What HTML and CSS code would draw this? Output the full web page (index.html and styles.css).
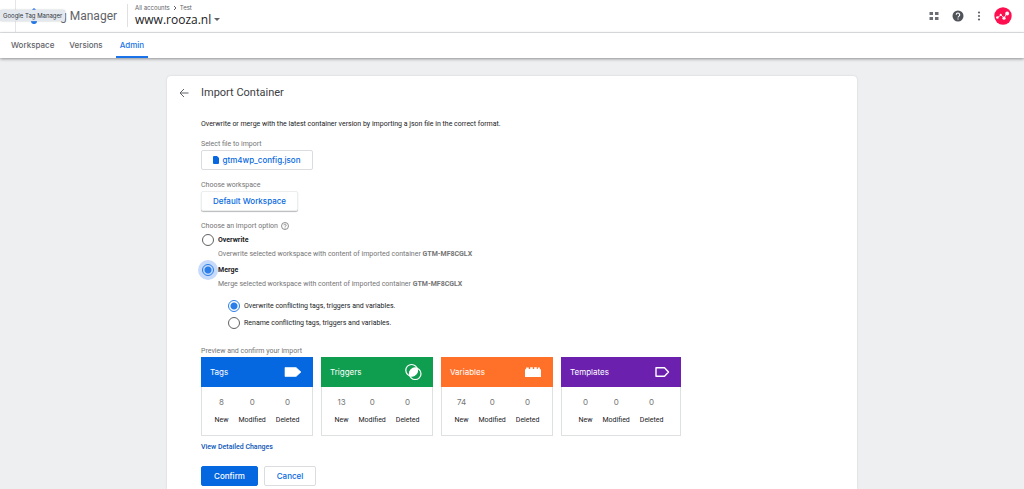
FILE: index.html
```html
<!DOCTYPE html>
<html lang="en">
<head>
<meta charset="utf-8">
<title>Google Tag Manager</title>
<link rel="stylesheet" href="styles.css">
</head>
<body>
<header class="topbar">
  <div class="brand">
    <svg class="logo" viewBox="0 0 18 18" aria-hidden="true"><path d="M9 1 17 9 9 17 1 9z" fill="#8ab4f8"/><path d="M6 4 9 1l8 8-3 3z" fill="#4285f4"/><circle cx="9" cy="14" r="3" fill="#1a73e8"/></svg>
    <span class="brand-name">Tag Manager</span>
    <span class="tooltip" role="tooltip">Google Tag Manager</span>
  </div>
  <div class="account">
    <div class="crumbs">All accounts <svg class="chevron" viewBox="0 0 4 6" aria-hidden="true"><path d="M1 1l2 2-2 2" fill="none" stroke="#5f6368"/></svg> Test</div>
    <button class="site" type="button">www.rooza.nl <svg class="caret" viewBox="0 0 6 3" aria-hidden="true"><path d="M0 0h6L3 3z" fill="#5f6368"/></svg></button>
  </div>
  <div class="actions">
    <button type="button" class="icon-btn" aria-label="Apps"><svg width="10" height="10" viewBox="0 0 10 10" fill="#6b6f74"><path d="M.5 1h3.500v3H.5zM6 1h3.500v3H6zM.5 6h3.500v3H.5zM6 6h3.500v3H6z"/></svg></button>
    <button type="button" class="icon-btn" aria-label="Help"><svg width="12" height="12" viewBox="0 0 12 12"><circle cx="6" cy="6" r="5.500" fill="#50545a"/><path d="M4.300 4.800a1.700 1.700 0 1 1 2.700 1.300C6.400 6.500 6 6.800 6 7.500M6 8.400v1.200" fill="none" stroke="#fff" stroke-width="1.100"/></svg></button>
    <button type="button" class="icon-btn" aria-label="More"><svg width="4" height="10" viewBox="0 0 4 10" fill="#5f6368"><circle cx="2" cy="1.500" r="1.100"/><circle cx="2" cy="5" r="1.100"/><circle cx="2" cy="8.500" r="1.100"/></svg></button>
    <button type="button" class="icon-btn" aria-label="Account"><svg width="18" height="18" viewBox="0 0 18 18"><circle cx="9" cy="9" r="8.700" fill="#ff0f4f"/><path d="M3.500 10.500 7 8l3 3 3-5" fill="none" stroke="#fff" stroke-width=".8"/><g fill="#fff"><circle cx="3.400" cy="10.500" r="1.300"/><circle cx="6.700" cy="7.700" r="1"/><circle cx="10" cy="11.200" r="1.600"/><circle cx="13.200" cy="6.500" r="1.900"/></g></svg></button>
  </div>
</header>
<nav class="tabs">
  <a class="tab" href="#workspace">Workspace</a>
  <a class="tab" href="#versions">Versions</a>
  <a class="tab tab-active" href="#admin" aria-current="page">Admin</a>
</nav>
<main class="page">
  <form class="sheet">
    <div class="sheet-head">
      <button type="button" class="icon-btn" aria-label="Back"><svg width="10" height="10" viewBox="0 0 10 10"><path d="M9.500 5H1M5 1 1 5l4 4" fill="none" stroke="#5f6368"/></svg></button>
      <h1 class="title">Import Container</h1>
    </div>
    <div class="content">
      <p class="intro">Overwrite or merge with the latest container version by importing a json file in the correct format.</p>

      <p class="label" id="file-label">Select file to import</p>
      <button type="button" class="btn btn-file" aria-describedby="file-label"><svg width="6" height="8" viewBox="0 0 6 8" aria-hidden="true"><path d="M1 0h3l2 2v5a1 1 0 0 1-1 1H1a1 1 0 0 1-1-1V1a1 1 0 0 1 1-1z" fill="#0668e1"/></svg>gtm4wp_config.json</button>

      <p class="label" id="ws-label">Choose workspace</p>
      <button type="button" class="btn btn-raised" aria-describedby="ws-label">Default Workspace</button>

      <fieldset class="options">
        <legend class="label legend">Choose an import option <svg width="8" height="8" viewBox="0 0 8 8" aria-hidden="true"><circle cx="4" cy="4" r="3.500" fill="none" stroke="#757575" stroke-width=".8"/><path d="M2.900 3.300a1.100 1.100 0 1 1 1.700.9C4.200 4.500 4 4.600 4 5.100M4 5.700v.8" fill="none" stroke="#757575" stroke-width=".8"/></svg></legend>
        <label class="choice choice-main"><input class="radio" type="radio" name="mode">Overwrite</label>
        <p class="hint">Overwrite selected workspace with content of imported container <b>GTM-MF8CGLX</b></p>
        <label class="choice choice-main"><input class="radio radio-focus" type="radio" name="mode" checked>Merge</label>
        <p class="hint">Merge selected workspace with content of imported container <b>GTM-MF8CGLX</b></p>
        <div class="suboptions">
          <label class="choice"><input class="radio" type="radio" name="conflict" checked>Overwrite conflicting tags, triggers and variables.</label>
          <label class="choice"><input class="radio" type="radio" name="conflict">Rename conflicting tags, triggers and variables.</label>
        </div>
      </fieldset>

      <p class="label label-preview">Preview and confirm your import</p>
      <div class="cards">
        <section class="card">
          <h2 class="card-head tags">Tags <svg width="20" height="18" viewBox="0 0 20 18" aria-hidden="true"><path d="M2 4.500h11l5 4.500-5 4.500H2z" fill="#fff" stroke="#fff" stroke-linejoin="round" stroke-width=".6"/></svg></h2>
          <table class="stats"><tbody><tr><td>8</td><td>0</td><td>0</td></tr></tbody><tfoot><tr><th>New</th><th>Modified</th><th>Deleted</th></tr></tfoot></table>
        </section>
        <section class="card">
          <h2 class="card-head triggers">Triggers <svg width="20" height="18" viewBox="0 0 20 18" aria-hidden="true"><circle cx="8.600" cy="7.300" r="5.800" fill="none" stroke="#fff" stroke-width="1.200"/><circle cx="12.200" cy="10.700" r="5.800" fill="none" stroke="#fff" stroke-width="1.200"/><path d="M14.290 5.290A5.800 5.800 0 0 1 6.510 12.710 5.800 5.800 0 0 1 14.290 5.290z" fill="#fff"/></svg></h2>
          <table class="stats"><tbody><tr><td>13</td><td>0</td><td>0</td></tr></tbody><tfoot><tr><th>New</th><th>Modified</th><th>Deleted</th></tr></tfoot></table>
        </section>
        <section class="card">
          <h2 class="card-head variables">Variables <svg width="20" height="18" viewBox="0 0 20 18" aria-hidden="true"><path d="M2 14V7q0-1 1.200-1.200V4.600h2.600V6h1.400V4.200h2.600V6h1.400V4.200h2.600V6h1V4.600h2V6q1.200 0 1.200 1.200V14z" fill="#fff"/></svg></h2>
          <table class="stats"><tbody><tr><td>74</td><td>0</td><td>0</td></tr></tbody><tfoot><tr><th>New</th><th>Modified</th><th>Deleted</th></tr></tfoot></table>
        </section>
        <section class="card card-wide">
          <h2 class="card-head templates">Templates <svg width="20" height="18" viewBox="0 0 20 18" aria-hidden="true"><path d="M5 4.800h8.500l4 4.200-4 4.200H5z" fill="none" stroke="#fff" stroke-width="1.400" stroke-linejoin="round"/></svg></h2>
          <table class="stats"><tbody><tr><td>0</td><td>0</td><td>0</td></tr></tbody><tfoot><tr><th>New</th><th>Modified</th><th>Deleted</th></tr></tfoot></table>
        </section>
      </div>
      <a class="details" href="#changes">View Detailed Changes</a>
      <div class="buttons">
        <button type="submit" class="btn btn-primary">Confirm</button>
        <button type="button" class="btn btn-cancel">Cancel</button>
      </div>
    </div>
  </form>
</main>
</body>
</html>
```
FILE: styles.css
```css
* { box-sizing: border-box; }
body {
  margin: 0;
  min-height: 100vh;
  display: flex;
  flex-direction: column;
  background: #eeeff1;
  color: #3c4043;
  font: 7px/10px Roboto, sans-serif;
}
p, h1, h2, fieldset, legend { margin: 0; padding: 0; border: 0; }
button { font: inherit; color: inherit; background: none; border: 0; padding: 0; }
svg { display: block; flex: none; }

.topbar {
  display: flex;
  align-items: center;
  height: 33px;
  padding-right: 12px;
  background: #fff;
  border-bottom: 1px solid #e4e5e7;
}
.brand {
  position: relative;
  display: flex;
  align-items: center;
  align-self: stretch;
  gap: 4px;
  width: 112px;
  margin-left: 15px;
  padding-left: 9px;
  border-left: 1px solid #e4e5e7;
}
.logo { width: 18px; height: 18px; }
.brand-name { font: 12px/16px Roboto, sans-serif; color: #5f6368; white-space: nowrap; }
.tooltip {
  position: absolute;
  left: -16px;
  top: 10px;
  padding: 0 3px;
  border-radius: 2px;
  background: #e3e8ee;
  box-shadow: 0 0 2px #b5b8bc;
  font: 6px/11px Inter, sans-serif;
  color: #30343a;
  white-space: nowrap;
}
.account { align-self: flex-start; margin-top: 4px; padding-left: 7px; border-left: 1px solid #e0e0e0; }
.crumbs { display: flex; align-items: center; gap: 3px; font: 6px/8px Inter, sans-serif; color: #5f6368; }
.chevron { width: 4px; height: 6px; }
.site { display: flex; align-items: center; gap: 3px; font: 12px/15px "Open Sans", sans-serif; color: #202124; }
.caret { width: 6px; height: 3px; }
.actions { display: flex; align-items: center; gap: 13px; margin-left: auto; }

.tabs {
  position: relative;
  display: flex;
  gap: 7px;
  height: 25px;
  padding-left: 7px;
  background: #fff;
  box-shadow: 0 1px 3px #8c8e91;
}
.tab {
  padding: 7px 4px 0;
  font: 500 8px/11px Inter, sans-serif;
  color: #5f6368;
  text-decoration: none;
}
.tab-active { margin-left: 2px; color: #1a73e8; border-bottom: 2px solid #1a73e8; }

.page { flex: 1; display: flex; justify-content: center; padding-top: 18px; }
.sheet {
  width: 100%;
  max-width: 690px;
  padding: 7px 12px 3px;
  background: #fff;
  border-radius: 4px 4px 0 0;
  box-shadow: 0 0 2px #c9cbce;
}
.sheet-head { display: flex; align-items: center; gap: 12px; }
.title { font: 400 11px/20px Roboto, sans-serif; color: #3c4043; }
.content { padding-left: 22px; }
.intro { margin-top: 16px; color: #202124; }
.label { margin: 10px 0 1px; color: #757575; }
.options { margin-top: 10px; }
.legend { display: flex; align-items: center; gap: 3px; margin: 0 0 3px; }

.btn {
  display: flex;
  align-items: center;
  justify-content: center;
  gap: 3px;
  height: 20px;
  border: 1px solid #dadce0;
  border-radius: 2px;
  background: #fff;
  color: #0668e1;
  font: 500 8px/10px Inter, sans-serif;
}
.btn-file { width: 112px; }
.btn-raised { width: 97px; border-color: #eceded; box-shadow: 0 1px 1px #b8babd; }
.btn-primary { width: 57px; background: #0668e1; border-color: #0668e1; color: #fff; }
.btn-cancel { width: 52px; }
.buttons { display: flex; gap: 6px; margin-top: 14px; }

.choice { display: flex; align-items: center; gap: 4px; height: 12px; color: #202124; }
.choice-main { padding-left: 1px; font-weight: 700; }
.radio {
  appearance: none;
  flex: none;
  width: 12px;
  height: 12px;
  margin: 0;
  border: 1px solid #616161;
  border-radius: 50%;
  background: #fff;
}
.radio:checked { border-color: #2b7de9; background: radial-gradient(circle, #2b7de9 3px, transparent 4px); }
.radio-focus { box-shadow: 0 0 0 4px #c6dafc; }
.radio-focus:checked { background-color: #c6dafc; }
.hint { margin: 3px 0 5px; padding-left: 17px; color: #757575; }
.suboptions { display: grid; gap: 5px; margin-top: 11px; padding-left: 27px; }

.label-preview { margin-top: 17px; }
.cards { display: flex; gap: 8px; }
.card { width: 112px; height: 79px; border: 1px solid #dfe0e1; border-top: 0; }
.card-wide { width: 120px; }
.card-head {
  display: flex;
  align-items: center;
  justify-content: space-between;
  height: 30px;
  margin: 0 -1px;
  padding: 0 10px 0 9px;
  color: #fff;
  font: 400 8px/12px Inter, sans-serif;
}
.tags { background: #0668e1; }
.triggers { background: #0f9d4f; }
.variables { background: #ff7129; }
.templates { background: #6b21ad; }
.stats { margin: 8px auto 0; border-spacing: 0; text-align: center; }
.stats td { padding: 0 5px 5px; font: 8px/14px Inter, sans-serif; color: #757575; }
.stats th { padding: 0 5px; font: 400 7px/12px Roboto, sans-serif; color: #202124; }
.details { display: block; width: max-content; margin-top: 6px; color: #0b57b8; font-weight: 500; text-decoration: none; }
```
